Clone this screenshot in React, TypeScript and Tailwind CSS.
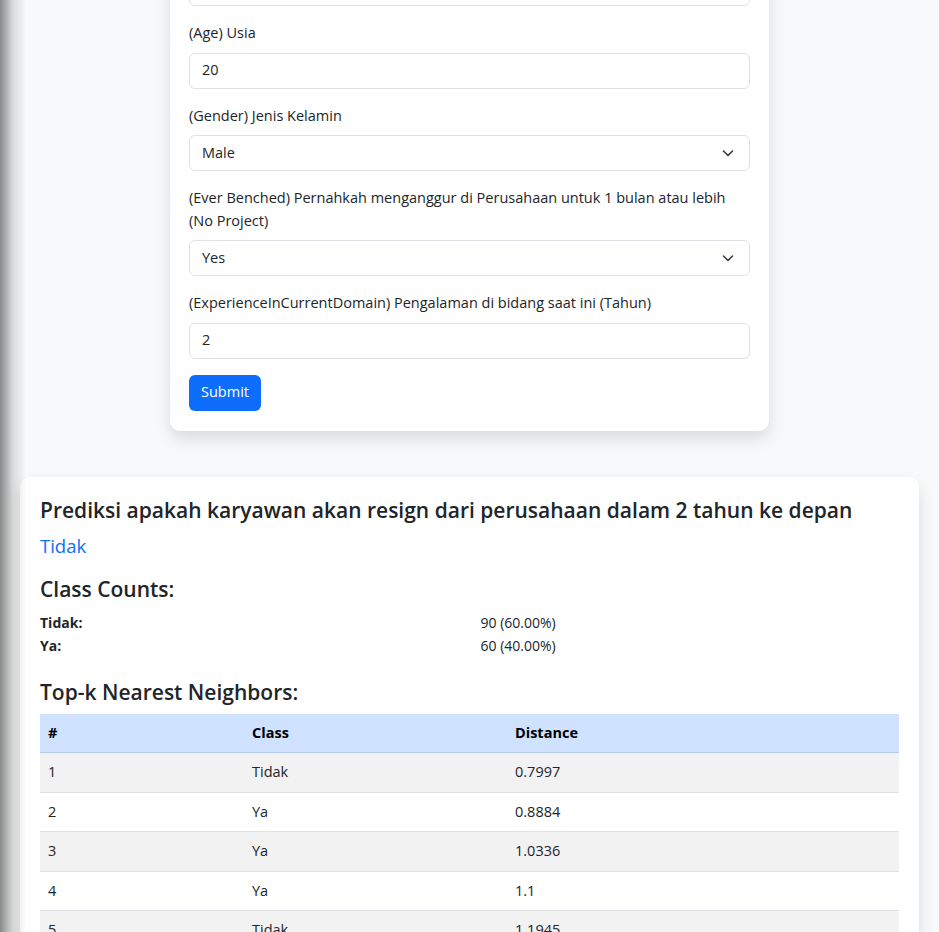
const neighbors = [
  { no: 1, cls: "Tidak", dist: "0.7997" },
  { no: 2, cls: "Ya", dist: "0.8884" },
  { no: 3, cls: "Ya", dist: "1.0336" },
  { no: 4, cls: "Ya", dist: "1.1" },
  { no: 5, cls: "Tidak", dist: "1.1945" },
];

function Field({ label, children }: { label: React.ReactNode; children: React.ReactNode }) {
  return (
    <div className="mb-4">
      <label className="block mb-2">{label}</label>
      {children}
    </div>
  );
}

function TextInput({ value }: { value: string }) {
  return (
    <div className="h-[36px] flex items-center px-3 bg-white border border-[#dee2e6] rounded-[6px]">
      {value}
    </div>
  );
}

function SelectInput({ value }: { value: string }) {
  return (
    <div className="h-[36px] flex items-center justify-between pl-3 pr-[13px] bg-white border border-[#dee2e6] rounded-[6px]">
      <span>{value}</span>
      <svg width="16" height="16" viewBox="0 0 16 16" fill="none">
        <path d="m3.5 6 4.5 4.5 4.5-4.5" stroke="#343a40" strokeWidth="1.6" strokeLinecap="round" strokeLinejoin="round" />
      </svg>
    </div>
  );
}

export default function App() {
  return (
    <div
      className="min-h-screen bg-[#f8f9fa] text-[#212529] text-[14.5px] leading-[22.5px] overflow-hidden"
      style={{ fontFamily: '"Open Sans", "Noto Sans", sans-serif' }}
    >
      <div className="flex flex-col">
        {/* Form card */}
        <div className="w-[599px] mx-auto -mt-[50px] bg-white rounded-[10px] shadow-[0_8px_16px_rgba(0,0,0,0.12)] px-[19px] pt-5 pb-[20px]">
          <div className="mb-4 h-[36px] border border-[#dee2e6] rounded-[6px]" />

          <Field label="(Age) Usia">
            <TextInput value="20" />
          </Field>

          <Field label="(Gender) Jenis Kelamin">
            <SelectInput value="Male" />
          </Field>

          <Field label="(Ever Benched) Pernahkah menganggur di Perusahaan untuk 1 bulan atau lebih (No Project)">
            <SelectInput value="Yes" />
          </Field>

          <Field label="(ExperienceInCurrentDomain) Pengalaman di bidang saat ini (Tahun)">
            <TextInput value="2" />
          </Field>

          <button className="h-[36px] px-3 bg-[#0d6efd] text-white rounded-[6px]">Submit</button>
        </div>

        {/* Result card */}
        <div className="mx-5 mt-[46px] bg-white rounded-[10px] shadow-[0_8px_16px_rgba(0,0,0,0.12)] p-5">
          <h4 className="text-[21px] leading-[27px] font-semibold mb-2">
            Prediksi apakah karyawan akan resign dari perusahaan dalam 2 tahun ke depan
          </h4>
          <p className="text-[18.5px] leading-[28px] text-[#0d6efd] mb-4">Tidak</p>

          <h4 className="text-[21px] leading-[27px] font-semibold mb-2">Class Counts:</h4>
          <div className="grid grid-cols-2 text-[14px] leading-[23px]">
            <div className="font-bold">Tidak:</div>
            <div className="pl-[11px]">90 (60.00%)</div>
            <div className="font-bold">Ya:</div>
            <div className="pl-[11px]">60 (40.00%)</div>
          </div>

          <h4 className="text-[21px] leading-[27px] font-semibold mt-[22px] mb-2">Top-k Nearest Neighbors:</h4>
          <table className="w-full border-collapse text-[14.5px]">
            <thead>
              <tr className="bg-[#cfe2ff] border-b border-[#b6c9e6]">
                <th className="text-left font-bold text-black px-2 py-2 w-[204px]">#</th>
                <th className="text-left font-bold text-black px-2 py-2 w-[263px]">Class</th>
                <th className="text-left font-bold text-black px-2 py-2">Distance</th>
              </tr>
            </thead>
            <tbody>
              {neighbors.map((n, i) => (
                <tr key={n.no} className={`border-b border-[#dee2e6] ${i % 2 === 0 ? "bg-[#f2f2f2]" : "bg-white"}`}>
                  <td className="px-2 py-2">{n.no}</td>
                  <td className="px-2 py-2">{n.cls}</td>
                  <td className="px-2 py-2">{n.dist}</td>
                </tr>
              ))}
            </tbody>
          </table>
        </div>
      </div>

      {/* shadow cast over the left edge */}
      <div className="fixed inset-y-0 left-0 w-[26px] pointer-events-none bg-linear-to-r from-black/45 via-black/12 to-transparent" />
    </div>
  );
}
